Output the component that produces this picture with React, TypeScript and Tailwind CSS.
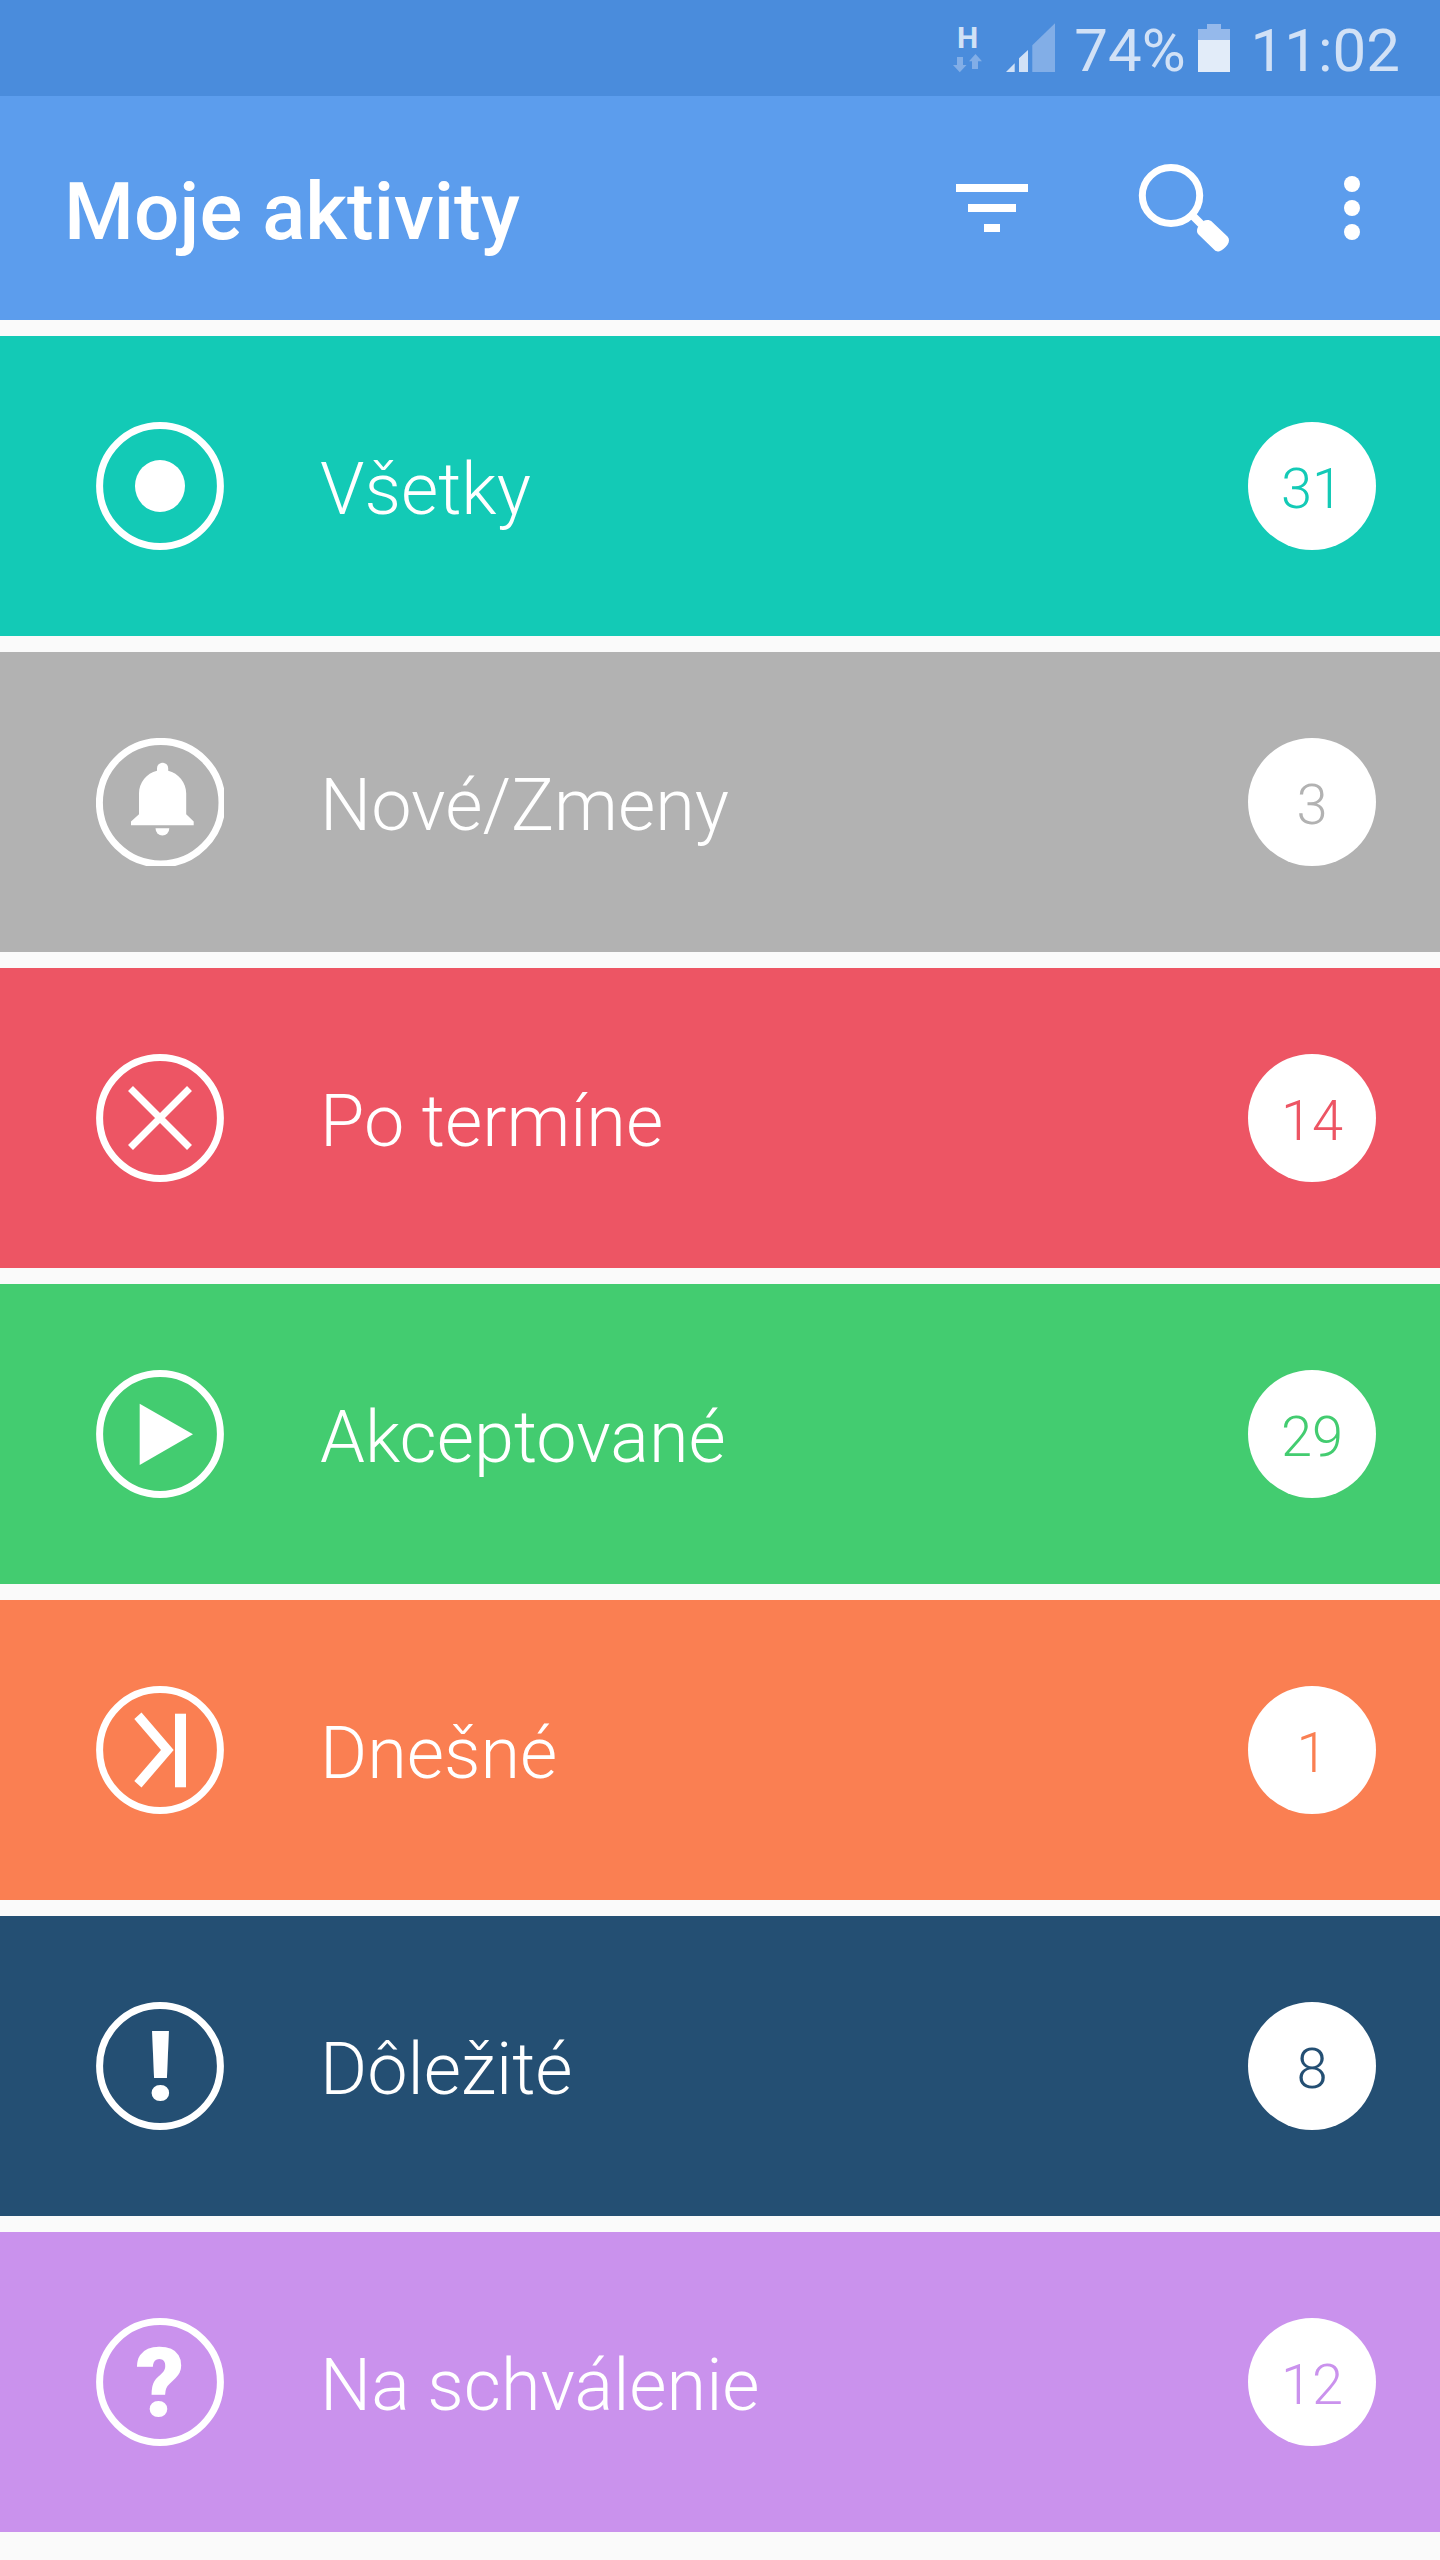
import type { ReactNode } from 'react'

interface Activity {
  id: string
  label: string
  count: number
  background: string
  text: string
  icon: ReactNode
}

function Ring() {
  return <circle cx="64" cy="64" r="60.4" fill="none" stroke="currentColor" strokeWidth="7" />
}

function GlyphIcon({ glyph }: { glyph: string }) {
  return (
    <>
      <Ring />
      <text
        x="64"
        y="98"
        textAnchor="middle"
        className="font-[Roboto,sans-serif] text-[96px] font-black"
        fill="currentColor"
      >
        {glyph}
      </text>
    </>
  )
}

const activities: Activity[] = [
  {
    id: 'all',
    label: 'Všetky',
    count: 31,
    background: 'bg-[#13cab6]',
    text: 'text-[#13cab6]',
    icon: (
      <>
        <Ring />
        <ellipse cx="64" cy="64" rx="25" ry="26" fill="currentColor" />
      </>
    ),
  },
  {
    id: 'new',
    label: 'Nové/Zmeny',
    count: 3,
    background: 'bg-[#b2b2b2]',
    text: 'text-[#b2b2b2]',
    icon: (
      <>
        <circle cx="64.7" cy="64.7" r="61.3" fill="none" stroke="currentColor" strokeWidth="7" />
        <path
          d="M61 32.7V30.3a5.6 5.6 0 0 1 11.2 0V32.7C82.500 35.200 90.200 44.500 90.200 55.500V76.200L97.700 83.500V87.300H35V83.500L43 76.200V55.500C43 44.500 50.500 35.200 61 32.700Z"
          fill="currentColor"
        />
        <path d="M59.500 90.300H73.300A6.900 7.200 0 0 1 59.500 90.300Z" fill="currentColor" />
      </>
    ),
  },
  {
    id: 'overdue',
    label: 'Po termíne',
    count: 14,
    background: 'bg-[#ed5564]',
    text: 'text-[#ed5564]',
    icon: (
      <>
        <Ring />
        <path d="M34.500 34.500L93.500 93.500M93.500 34.500L34.500 93.500" stroke="currentColor" strokeWidth="7" />
      </>
    ),
  },
  {
    id: 'accepted',
    label: 'Akceptované',
    count: 29,
    background: 'bg-[#43cc70]',
    text: 'text-[#43cc70]',
    icon: (
      <>
        <Ring />
        <path d="M43.700 33.700L97 64.300L43.700 95Z" fill="currentColor" />
      </>
    ),
  },
  {
    id: 'today',
    label: 'Dnešné',
    count: 1,
    background: 'bg-[#fa7f52]',
    text: 'text-[#fa7f52]',
    icon: (
      <>
        <Ring />
        <path d="M38.300 33L45.500 26.500L77.700 64L45.500 101.500L38.300 95L65 64Z" fill="currentColor" />
        <path d="M79 27.700H90V101.300H79Z" fill="currentColor" />
      </>
    ),
  },
  {
    id: 'important',
    label: 'Dôležité',
    count: 8,
    background: 'bg-[#244f73]',
    text: 'text-[#244f73]',
    icon: <GlyphIcon glyph="!" />,
  },
  {
    id: 'approval',
    label: 'Na schválenie',
    count: 12,
    background: 'bg-[#ca92ed]',
    text: 'text-[#ca92ed]',
    icon: <GlyphIcon glyph="?" />,
  },
]

function StatusBar() {
  return (
    <div className="flex h-24 items-center justify-end bg-[#4a8cdc] pr-10 text-[60px] leading-none text-[#d1e1f6]">
      <svg className="mr-[22px] h-24 w-8 shrink-0" viewBox="0 0 32 96">
        <text x="5" y="48" className="text-[30px] font-bold" fill="currentColor">
          H
        </text>
        <path d="M5 57H11V65H14.500L7.800 72.200L1 65H5Z" fill="#82aee7" />
        <path d="M20 69V61.300H17L23.500 54L30 61.300H26V69Z" fill="#82aee7" />
      </svg>
      <svg className="mr-[18px] h-24 w-[50px] shrink-0" viewBox="0 0 50 96">
        <path d="M0 72L8.700 63.300V72ZM13 72V58.300L22 50V72Z" fill="currentColor" />
        <path d="M26.300 72V45.300L49 23.300V72Z" fill="#82aee7" />
      </svg>
      <span className="pt-[5px]">74%</span>
      <svg className="mr-[21px] ml-3 h-24 w-8 shrink-0" viewBox="0 0 32 96">
        <path d="M0 40V29H9V24H23V29H32V40Z" fill="#95b9eb" />
        <path d="M0 40H32V72H0Z" fill="#e2ecf9" />
      </svg>
      <span className="pt-[5px]">11:02</span>
    </div>
  )
}

function AppBar() {
  return (
    <header className="flex h-56 items-center bg-[#5c9ded] pr-10 pl-16 text-white">
      <h1 className="flex-1 pt-[7px] text-[80px] leading-none font-medium">Moje aktivity</h1>
      <button type="button" aria-label="Filter" className="mr-24">
        <svg className="size-24" viewBox="0 0 24 24" fill="currentColor">
          <path d="M10 18h4v-2h-4v2zM3 6v2h18V6H3zm3 7h12v-2H6v2z" />
        </svg>
      </button>
      <button type="button" aria-label="Hľadať" className="mr-[72px]">
        <svg className="size-24" viewBox="0 0 96 96">
          <ellipse cx="35" cy="35.500" rx="28.700" ry="27.900" fill="none" stroke="currentColor" strokeWidth="7" />
          <path d="M56 55L69 68" stroke="currentColor" strokeWidth="8" />
          <path
            d="M67.500 61C70 59.700 74 59.700 76.200 62L91.500 76.500C93.500 78.500 93.500 82 91.500 84.800C89 88.200 86.500 90.200 83.500 91.200C81.500 91.700 80 91.500 78.500 90L62.500 74.500C60.500 72.500 60.700 70 61.700 67.500Z"
            fill="currentColor"
          />
        </svg>
      </button>
      <button type="button" aria-label="Viac">
        <svg className="size-24" viewBox="0 0 24 24" fill="currentColor">
          <circle cx="12" cy="6" r="2" />
          <circle cx="12" cy="12" r="2" />
          <circle cx="12" cy="18" r="2" />
        </svg>
      </button>
    </header>
  )
}

function ActivityRow({ activity }: { activity: Activity }) {
  return (
    <li className={`flex h-[300px] items-center px-16 pl-24 text-white ${activity.background}`}>
      <svg className="mr-24 size-32 shrink-0" viewBox="0 0 128 128">
        {activity.icon}
      </svg>
      <span className="flex-1 pt-2 text-7xl leading-none font-light">{activity.label}</span>
      <span
        className={`flex size-32 items-center justify-center rounded-full bg-white pt-[6px] text-[56px] leading-none font-light ${activity.text}`}
      >
        {activity.count}
      </span>
    </li>
  )
}

export default function App() {
  return (
    <div className="h-[2560px] w-[1440px] overflow-hidden bg-[#fafafa] font-[Roboto,sans-serif]">
      <StatusBar />
      <AppBar />
      <ul className="flex flex-col gap-4 pt-4">
        {activities.map((activity) => (
          <ActivityRow key={activity.id} activity={activity} />
        ))}
      </ul>
    </div>
  )
}
